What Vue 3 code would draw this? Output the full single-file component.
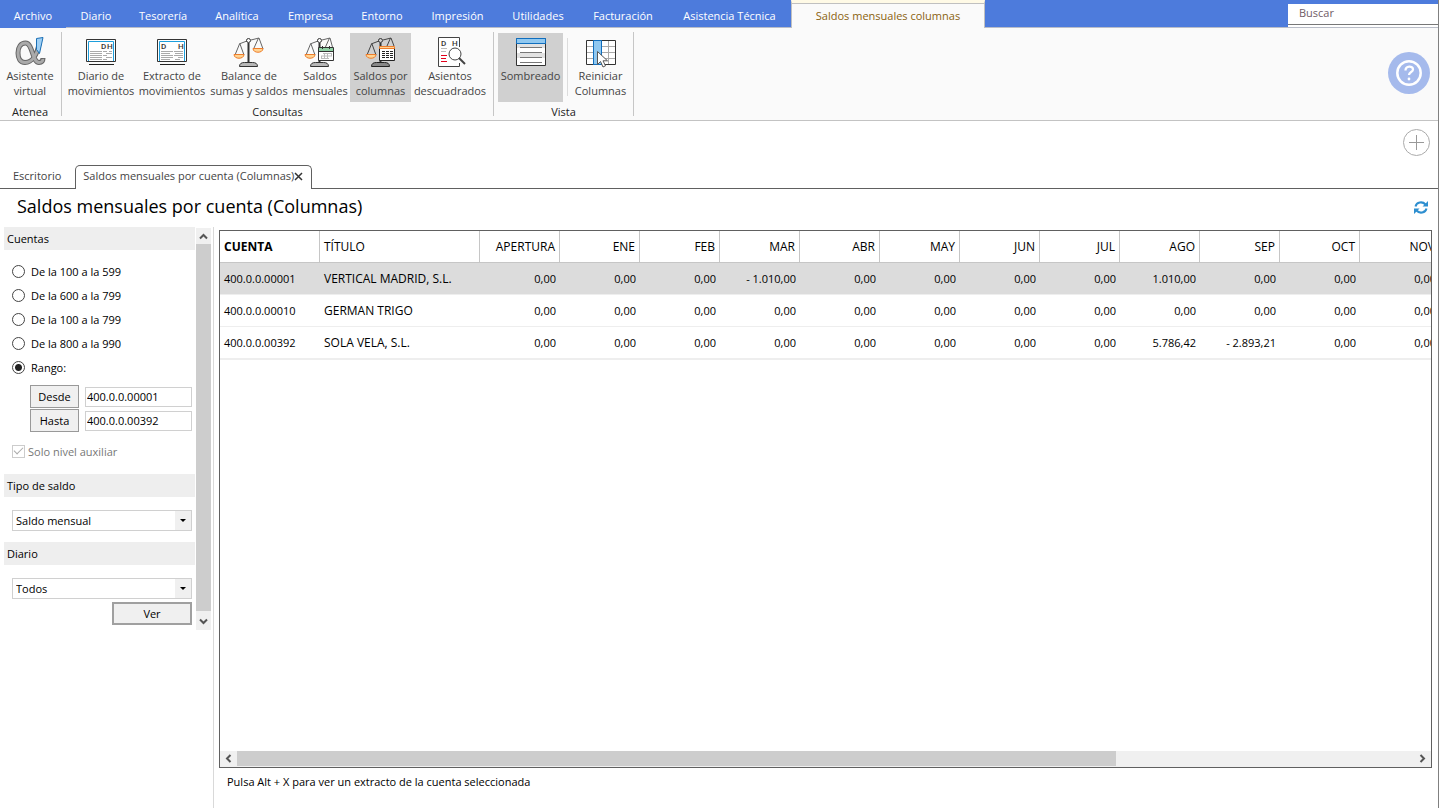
<script setup>
import { ref } from 'vue'

const menu = ['Archivo', 'Diario', 'Tesorería', 'Analítica', 'Empresa', 'Entorno', 'Impresión', 'Utilidades', 'Facturación', 'Asistencia Técnica', 'Saldos mensuales columnas']

const ranges = ['De la 100 a la 599', 'De la 600 a la 799', 'De la 100 a la 799', 'De la 800 a la 990', 'Rango:']
const range = ref(4)
const from = ref('400.0.0.00001')
const to = ref('400.0.0.00392')
const balance = ref('Saldo mensual')
const journal = ref('Todos')

const months = ['APERTURA', 'ENE', 'FEB', 'MAR', 'ABR', 'MAY', 'JUN', 'JUL', 'AGO', 'SEP', 'OCT', 'NOV']
const rows = [
  { account: '400.0.0.00001', title: 'VERTICAL MADRID, S.L.', values: { MAR: '- 1.010,00', AGO: '1.010,00' } },
  { account: '400.0.0.00010', title: 'GERMAN TRIGO', values: {} },
  { account: '400.0.0.00392', title: 'SOLA VELA, S.L.', values: { AGO: '5.786,42', SEP: '- 2.893,21' } }
]
const selected = ref(0)
</script>

<template>
  <div class="window">
    <header class="menubar">
      <nav class="menu">
        <a v-for="(m, i) in menu" :key="m" href="#" :class="{ file: i === 0, active: i === 10 }">{{ m }}</a>
      </nav>
      <div class="search"><input type="text" placeholder="Buscar" aria-label="Buscar"></div>
    </header>

    <section class="ribbon">
      <div class="group atenea">
        <div class="tools">
          <button type="button">
            <svg viewBox="0 0 32 32" fill="none">
              <path d="M25 8C23 19 18 26.500 11 26.500C6 26.500 4 22 4 17C4 11 7 7 11.500 7C19 7 18 26.500 25 26.500C27.500 26.500 29 25 29 22" stroke="#666" stroke-width="5" />
              <path d="M25 8C23 19 18 26.500 11 26.500C6 26.500 4 22 4 17C4 11 7 7 11.500 7C19 7 18 26.500 25 26.500C27.500 26.500 29 25 28.800 23" stroke="#aaa" stroke-width="3" />
              <path d="M22.500 2.500l6.500-1-3.500 16-3-4z" fill="#9fd0f5" stroke="#1b6fb5" />
            </svg>
            <span>Asistente virtual</span>
          </button>
        </div>
        <h2>Atenea</h2>
      </div>

      <div class="group consultas">
        <div class="tools">
          <button type="button">
            <svg viewBox="0 0 32 32">
              <path d="M1.500 3.500h29v22h-29z" fill="#fff" stroke="#333" />
              <path d="M3.500 25V5.500h25V25" fill="none" stroke="#1e9fdc" />
              <text x="16" y="13" class="letters">D</text><text x="22" y="13" class="letters">H</text>
              <path d="M5 15.500h12m1 0h4m2 0h3M5 17.500h12m4 0h6M5 19.500h12m1 0h4M5 21.500h12m4 0h6M5 23.500h12m1 0h4" stroke="#aaa" />
              <path d="M4 28.500h25" stroke="#222" />
            </svg>
            <span>Diario de movimientos</span>
          </button>
          <button type="button">
            <svg viewBox="0 0 32 32">
              <path d="M1.500 3.500h29v22h-29z" fill="#fff" stroke="#333" />
              <path d="M3.500 25V5.500h25V25" fill="none" stroke="#1e9fdc" />
              <text x="5" y="13" class="letters">D</text><text x="22" y="13" class="letters">H</text>
              <path d="M5 15.500h12m1 0h9M5 17.500h9m5 0h8M5 19.500h12m1 0h9M5 21.500h12m5 0h5M5 23.500h9m5 0h5" stroke="#aaa" />
              <path d="M4 28.500h25" stroke="#222" />
            </svg>
            <span>Extracto de movimientos</span>
          </button>
          <button type="button">
            <svg viewBox="0 0 32 32">
              <g fill="none" stroke="#666">
                <path d="M15.500 7v19" stroke="#333" stroke-width="2" />
                <path d="M6 8l8-3m4-1l8-2M6.500 8L2 19m5-11l4 11M25.500 2L21 12m5-10l4 11" />
                <circle cx="15.500" cy="4.500" r="2" stroke="#333" />
                <path d="M6.500 30.500c0-3 2-4 5-4h8c3 0 5 1 5 4z" fill="#b8b8b8" stroke="#333" />
              </g>
              <path d="M1 18.500h10c0 5-10 5-10 0zM20 12.500h10c0 5-10 5-10 0z" fill="#ffd493" stroke="#ee7d2b" />
            </svg>
            <span>Balance de<br>sumas y saldos</span>
          </button>
          <button type="button">
            <svg viewBox="0 0 32 32">
              <g fill="none" stroke="#666">
                <path d="M15.500 7v19" stroke="#333" stroke-width="2" />
                <path d="M6 8l8-3m4-1l8-2M6.500 8L2 19m5-11l4 11M25.500 2L21 12m5-10l3 11" />
                <circle cx="15.500" cy="4.500" r="2" stroke="#333" />
                <path d="M6.500 30.500c0-3 2-4 5-4h8c3 0 5 1 5 4z" fill="#b8b8b8" stroke="#333" />
              </g>
              <path d="M1 18.500h10c0 5-10 5-10 0z" fill="#ffd493" stroke="#ee7d2b" />
              <path d="M14.500 11.500h15v13h-15z" fill="#fff" stroke="#333" />
              <path d="M15 12h14v3H15z" fill="#8fd0a4" />
              <path d="M14 15.500h16M18.500 10v3m7-3v3" stroke="#333" />
              <path d="M19 17.500h9m-11 2.500h11m-11 2.500h8M17.500 20v2.500m3-5v5m3-5v5m4-5V20" fill="none" stroke="#bbb" />
            </svg>
            <span>Saldos mensuales</span>
          </button>
          <button type="button" class="pressed">
            <svg viewBox="0 0 32 32">
              <g fill="none" stroke="#666">
                <path d="M15.500 7v19" stroke="#333" stroke-width="2" />
                <path d="M6 8l8-3m4-1l8-2M6.500 8L2 19m5-11l4 11M25.500 2L22 10m4-8l3 8" stroke="#444" />
                <circle cx="15.500" cy="4.500" r="2" stroke="#333" />
                <path d="M6.500 30.500c0-3 2-4 5-4h8c3 0 5 1 5 4z" fill="#888" stroke="#222" />
              </g>
              <path d="M1 18.500h10c0 5-10 5-10 0z" fill="#ffd493" stroke="#ee7d2b" />
              <path d="M14.500 11.500h15v13h-15z" fill="#fff" stroke="#222" />
              <path d="M14.500 10.500h15v2h-15z" fill="#ffd493" stroke="#ee7d2b" />
              <path d="M17 15.500h3m1 0h3m1 0h3M17 17.500h3m1 0h3m1 0h3M17 19.500h3m1 0h3m1 0h3M17 21.500h3m1 0h3m1 0h3" stroke="#222" />
            </svg>
            <span>Saldos por columnas</span>
          </button>
          <button type="button">
            <svg viewBox="0 0 32 32">
              <path d="M25.500 11V1.500h-21v29h21V27" fill="#fff" stroke="#444" />
              <text x="7" y="10" class="letters">D</text><text x="18" y="10" class="letters">H</text>
              <path d="M7 12.500h6m5 0h4" stroke="#bbb" />
              <path d="M7 15.500h5" stroke="#bbb" />
              <path d="M7 19.500h6M7 22.500h5M7 25.500h6" stroke="#e3001b" />
              <circle cx="21" cy="18" r="6" fill="#fff" stroke="#444" />
              <path d="M25 22l6 6" stroke="#444" stroke-width="2" />
            </svg>
            <span>Asientos descuadrados</span>
          </button>
        </div>
        <h2>Consultas</h2>
      </div>

      <div class="group vista">
        <div class="tools">
          <button type="button" class="pressed">
            <svg viewBox="0 0 32 32">
              <path d="M1.500 2.500h29v27h-29z" fill="#fff" stroke="#333" />
              <path d="M2 8h28v4H2zm0 9h28v5H2z" fill="#e2e2e2" />
              <path d="M1.500 2.500h29v5h-29z" fill="#90c8f0" stroke="#106ebe" />
              <path d="M5 11.500h22M5 16.500h22M5 21.500h22M5 26.500h22" stroke="#777" />
            </svg>
            <span>Sombreado</span>
          </button>
          <i class="divider"></i>
          <button type="button">
            <svg viewBox="0 0 32 32">
              <path d="M1.500 4.500h29v24h-29z" fill="#fff" stroke="#333" />
              <path d="M2 10.500h28M2 16.500h28M2 22.500h28M23.500 5v23" stroke="#aaa" />
              <path d="M8.500 4.500h8v24h-8z" fill="#90c8f0" stroke="#106ebe" />
              <path d="M12.500 15.500v13l3-3 2.500 5.500 2.500-1.200-2.500-5h4.500z" fill="#fff" stroke="#555" />
            </svg>
            <span>Reiniciar Columnas</span>
          </button>
        </div>
        <h2>Vista</h2>
      </div>

      <button type="button" class="help" aria-label="Ayuda">
        <svg viewBox="0 0 42 42">
          <circle cx="21" cy="21" r="21" fill="#a5baec" />
          <circle cx="21" cy="21" r="11.700" fill="none" stroke="#fff" stroke-width="2.500" />
          <path d="M17.500 18.500c0-5 7.500-5 7.500-1 0 2.500-4 2.500-4 5.500" fill="none" stroke="#fff" stroke-width="2.300" />
          <circle cx="21" cy="27" r="1.400" fill="#fff" />
        </svg>
      </button>
    </section>

    <nav class="tabs">
      <a href="#" class="tab">Escritorio</a>
      <div class="tab open">
        <a href="#">Saldos mensuales por cuenta (Columnas)</a>
        <button type="button" aria-label="Cerrar">
          <svg viewBox="0 0 9 9"><path d="M1 1l7 7M8 1l-7 7" stroke="#333" stroke-width="1.500" /></svg>
        </button>
      </div>
      <button type="button" class="add" aria-label="Nueva pestaña">
        <svg viewBox="0 0 27 27"><circle cx="13.500" cy="13.500" r="13" fill="none" stroke="#aaa" /><path d="M13.500 6v15M6 13.500h15" stroke="#999" /></svg>
      </button>
    </nav>

    <div class="heading">
      <h1>Saldos mensuales por cuenta (Columnas)</h1>
      <button type="button" aria-label="Actualizar">
        <svg viewBox="0 0 14 13">
          <path d="M1.500 5.500C2.500 1 8.500 0 11.500 3.500M12.500 7.500c-1 4.500-7 5.500-10 2" fill="none" stroke="#2e8fd0" stroke-width="2" />
          <path d="M14 0v5.500H8.500zM0 13V7.500h5.500z" fill="#2e8fd0" />
        </svg>
      </button>
    </div>

    <main>
      <aside>
        <form class="filters" @submit.prevent>
          <h3>Cuentas</h3>
          <div class="ranges">
            <label v-for="(r, i) in ranges" :key="i"><input v-model="range" type="radio" name="range" :value="i">{{ r }}</label>
          </div>
          <div class="limits">
            <button type="button">Desde</button><input v-model="from" type="text" aria-label="Desde">
            <button type="button">Hasta</button><input v-model="to" type="text" aria-label="Hasta">
          </div>
          <label class="level"><input type="checkbox" checked disabled>Solo nivel auxiliar</label>
          <h3>Tipo de saldo</h3>
          <div class="combo">
            <select v-model="balance" aria-label="Tipo de saldo"><option>Saldo mensual</option></select><i></i>
          </div>
          <h3>Diario</h3>
          <div class="combo last">
            <select v-model="journal" aria-label="Diario"><option>Todos</option></select><i></i>
          </div>
          <button type="submit" class="view">Ver</button>
        </form>
        <div class="vbar">
          <svg viewBox="0 0 15 16"><path d="M4 10.500l3.500-3.500 3.500 3.500" /></svg>
          <div class="thumb"></div>
          <svg viewBox="0 0 15 19"><path d="M4 8.500l3.500 3.500 3.500-3.500" /></svg>
        </div>
      </aside>

      <section class="content">
        <div class="sheet">
          <div class="viewport">
            <table>
              <colgroup><col class="c-account"><col class="c-title"><col v-for="m in months" :key="m" class="c-month"></colgroup>
              <thead>
                <tr><th class="sorted">CUENTA</th><th>TÍTULO</th><th v-for="m in months" :key="m" class="num">{{ m }}</th></tr>
              </thead>
              <tbody>
                <tr v-for="(r, i) in rows" :key="r.account" :class="{ selected: i === selected }" @click="selected = i">
                  <td class="code">{{ r.account }}</td><td>{{ r.title }}</td>
                  <td v-for="m in months" :key="m" class="num">{{ r.values[m] || '0,00' }}</td>
                </tr>
              </tbody>
            </table>
          </div>
          <div class="hbar">
            <svg viewBox="0 0 17 15"><path d="M10.500 4L7 7.500l3.500 3.500" /></svg>
            <div class="track"><div class="thumb"></div></div>
            <svg viewBox="0 0 17 15"><path d="M6.500 4L10 7.500 6.500 11" /></svg>
          </div>
        </div>
        <p>Pulsa Alt + X para ver un extracto de la cuenta seleccionada</p>
      </section>
    </main>
  </div>
</template>

<style>
body { background: #fff; }
</style>

<style scoped>
* { box-sizing: border-box; }
.window { height: 100vh; display: flex; flex-direction: column; border-right: 1px solid #808080; overflow: hidden; font-family: "Open Sans", "Noto Sans", sans-serif; font-size: 11px; line-height: 15px; color: #000; background: #fff; }
button, input, select { font: inherit; color: inherit; margin: 0; padding: 0; border: 0; background: none; border-radius: 0; }
a { color: inherit; text-decoration: none; }
h1, h2, h3, p { margin: 0; font-weight: normal; }
h2, h3 { font-size: 11px; }
svg { display: block; }

.menubar { flex: none; height: 28px; display: flex; justify-content: space-between; background: #4d7bdc; box-shadow: inset 0 -1px #b9bdc8; }
.menu { display: grid; grid-template-columns: 66px 60px 74px 74px 73px 70px 81px 80px 90px 123px 194px; color: #fff; white-space: nowrap; }
.menu a { display: flex; justify-content: center; padding-top: 8px; }
.menu .file { background: #4d7bdc; }
.menu .active { padding-top: 5px; border: 1px solid #c0c0c0; border-top: 3px solid #fffae6; border-bottom: 0; box-shadow: inset 0 1px #c0c0c0; background: #fafafa; color: #8a6210; }
.search { width: 150px; margin: 4px 0 1px; background: #fff; }
.search input { display: block; width: 100%; height: 21px; padding: 0 11px 4px; border-bottom: 1px solid #777; }
.search input::placeholder { color: #705c66; opacity: 1; }

.ribbon { flex: none; height: 93px; display: flex; padding-top: 4px; background: #fafafa; border-bottom: 1px solid #c3c3c3; color: #444; }
.group { height: 84px; border-right: 1px solid #c6c6c6; }
.group h2 { margin-top: 2px; text-align: center; color: #222; }
.tools { display: grid; height: 69px; margin-top: 1px; }
.tools button { display: flex; flex-direction: column; align-items: center; padding-top: 3px; }
.tools svg { width: 32px; height: 32px; }
.pressed { background: #d0d0d0; }
.atenea { padding-right: 1px; }
.atenea .tools { grid-template-columns: 60px; }
.consultas .tools { grid-template-columns: 70px 72px 82px 60px 61px 78px; padding: 0 4px; }
.tools span { width: min-content; }
.consultas button:nth-child(3) span { white-space: nowrap; }
.consultas button:nth-child(5) span { width: 58px; }
.consultas button:nth-child(-n+2) span { width: 68px; }
.vista .tools { grid-template-columns: 65px 9px 57px; padding: 0 4px; }
.divider { width: 1px; height: 58px; margin: 5px 4px; background: #dcdcdc; }
.letters { font: 500 8px Roboto, sans-serif; fill: #333; }
.help { width: 42px; height: 42px; margin: 20px 8px 0 auto; }

.tabs { flex: none; height: 68px; display: flex; align-items: flex-end; color: #444; box-shadow: inset 0 -1px #606060; }
.tab { height: 24px; padding: 3px 14px 0 13px; }
.open { display: flex; width: 237px; padding: 2px 8px 0 7px; border: 1px solid #606060; border-bottom: 0; border-radius: 5px 5px 0 0; background: #fff; white-space: nowrap; justify-content: space-between; }
.open button { flex: none; width: 9px; height: 9px; margin-top: 4px; }
.add { align-self: flex-start; width: 27px; height: 27px; margin: 8px 8px 0 auto; }

.heading { flex: none; display: flex; align-items: center; justify-content: space-between; height: 38px; padding: 0 10px 2px 17px; }
h1 { font-size: 18px; line-height: 24px; padding-bottom: 2px; }
.heading button { width: 14px; height: 13px; }

main { flex: 1; min-height: 0; display: flex; }
aside { flex: none; width: 214px; display: flex; align-items: flex-start; gap: 1px; padding-left: 4px; border-right: 1px solid #d9d9d9; }
.filters { width: 191px; }
h3 { height: 23px; padding: 4px 3px; background: #eee; }
.ranges { padding: 9px 8px 0; }
.ranges label { display: flex; align-items: center; gap: 6px; height: 24px; }
.ranges input { appearance: none; width: 13px; height: 13px; border: 1px solid #444; border-radius: 50%; background: #fff; }
.ranges input:checked { background: radial-gradient(circle, #222 3px, #fff 4px); }
.limits { display: grid; grid-template-columns: 49px 1fr; align-items: center; gap: 1px 6px; padding: 6px 3px 0 26px; }
.limits button { height: 23px; border: 1px solid #999; background: #f0f0f0; }
.limits input { width: 100%; height: 20px; margin-top: 1px; padding: 0 1px 2px; border: 1px solid #d0d0d0; background: #fff; }
.level { display: flex; align-items: center; gap: 3px; height: 15px; margin: 12px 8px 15px; color: #777; }
.level input { appearance: none; width: 13px; height: 13px; border: 1px solid #ccc; }
.level input::after { content: ""; display: block; width: 8px; height: 4px; margin: 1px; border: solid #aaa; border-width: 0 0 1px 1px; transform: rotate(-45deg); }
.combo { position: relative; margin: 13px 3px 11px 8px; }
.combo.last { margin-bottom: 3px; }
.combo select { display: block; appearance: none; width: 100%; height: 21px; padding: 0 20px 0 3px; border: 1px solid #d0d0d0; background: #fff; }
.combo i { position: absolute; top: 1px; right: 1px; bottom: 1px; width: 16px; background: #f0f0f0; pointer-events: none; }
.combo i::after { content: ""; display: block; width: 0; margin: 8px 5px; border: 3px solid transparent; border-top-color: #000; border-bottom: 0; }
.view { display: block; width: 80px; height: 23px; margin: 0 3px 0 auto; border: 2px solid #a0a0a0; background: #f0f0f0; }
.vbar { width: 15px; height: 402px; display: flex; flex-direction: column; background: #f0f0f0; margin-top: 1px; }
.vbar svg { width: 15px; height: 16px; }
.vbar svg:last-child { height: 19px; }
.vbar .thumb { flex: 1; background: #cdcdcd; }
.vbar path, .hbar path { fill: none; stroke: #555; stroke-width: 2px; }

.content { flex: 1; min-width: 0; display: flex; flex-direction: column; padding: 3px 6px 19px 5px; }
.sheet { flex: 1; min-height: 0; display: flex; flex-direction: column; border: 1px solid #606060; }
.viewport { flex: 1; overflow: hidden; }
table { table-layout: fixed; width: 1220px; border-collapse: separate; border-spacing: 0; font-size: 12px; border-bottom: 1px solid #eee; }
.c-account { width: 100px; }
.c-title { width: 160px; }
.c-month { width: 80px; }
th, td { height: 32px; padding: 0 3px 0 4px; text-align: left; font-weight: normal; white-space: nowrap; border-bottom: 1px solid #eee; }
th { border-right: 1px solid #c6c6c6; border-bottom-color: #c6c6c6; }
th.num { padding-right: 4px; }
td.code, td.num { font-size: 11px; }
td.num { padding-right: 4px; }
.sorted { font-weight: bold; }
.num { text-align: right; }
.selected td { background: #dcdcdc; }
.hbar { flex: none; height: 16px; display: flex; padding-bottom: 1px; background: #f0f0f0; }
.hbar svg { width: 17px; height: 15px; }
.track { flex: 1; }
.hbar .thumb { width: 74.7%; height: 15px; background: #cdcdcd; }
p { margin-top: 6px; padding-left: 8px; }
</style>
